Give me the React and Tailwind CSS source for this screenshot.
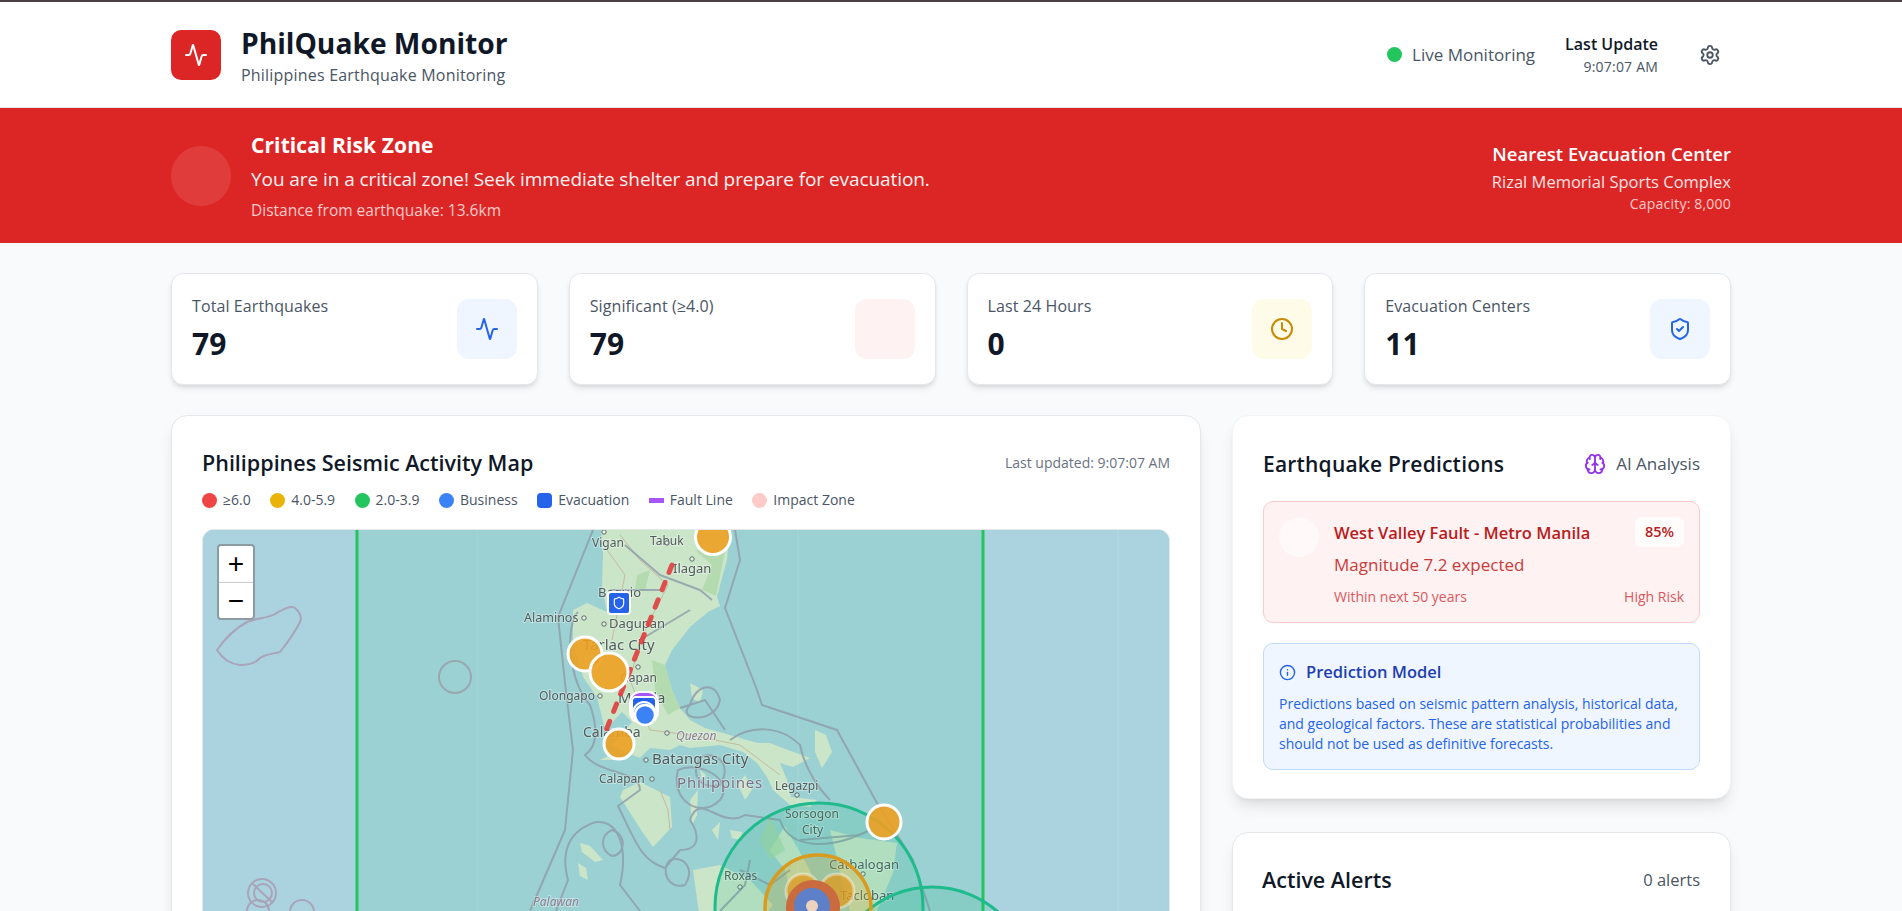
import React from "react";
import { Activity, Settings, Clock, ShieldCheck, Brain, Info, Shield } from "lucide-react";

const font = "font-['Open_Sans','Noto_Sans',sans-serif]";

function Stat({ label, value, box, children }) {
  return (
    <div className="flex items-center justify-between rounded-xl border border-gray-200 bg-white px-5 h-[112px] shadow-md">
      <div>
        <div className="text-[16px] leading-5 text-gray-600 tracking-[0.1px]">{label}</div>
        <div className="mt-[10px] text-[30px] leading-9 font-bold text-gray-900">{value}</div>
      </div>
      <div className={`flex h-[60px] w-[60px] items-center justify-center rounded-xl ${box}`}>{children}</div>
    </div>
  );
}

function Legend({ shape, label }) {
  return (
    <div className="flex items-center gap-[6px]">
      {shape}
      <span className="text-[14px] leading-5 text-gray-600">{label}</span>
    </div>
  );
}

const dot = (c) => <span className={`h-[15px] w-[15px] rounded-full ${c}`} />;

const labels = [
  ["Vigan", 592, 547, 12],
  ["Tabuk", 650, 545, 12],
  ["Ilagan", 673, 573, 13],
  ["Baguio", 598, 597, 13],
  ["Alaminos", 524, 622, 12.5],
  ["Dagupan", 609, 628, 13],
  ["Tarlac City", 583, 650, 15],
  ["Gapan", 620, 682, 12],
  ["Olongapo", 539, 700, 12],
  ["Manila", 618, 703, 15],
  ["Calamba", 583, 737, 14],
  ["Batangas City", 652, 764, 15],
  ["Calapan", 599, 783, 12],
  ["Legazpi", 775, 790, 12],
  ["Sorsogon", 785, 818, 12],
  ["City", 802, 834, 12],
  ["Catbalogan", 829, 869, 13],
  ["Roxas", 724, 880, 12],
  ["Tacloban", 840, 900, 13],
];

const towns = [
  [604, 532], [667, 543], [692, 559], [584, 618], [604, 624], [638, 667], [600, 696], [667, 733],
  [646, 760], [652, 779], [797, 795], [740, 887], [863, 874],
];

const land = [
  "M600,520 L725,520 L728,548 L727,560 L722,578 L717,597 L720,606 L708,612 L690,627 L680,640 L672,650 L665,665 L672,690 L680,708 L690,720 L705,728 L723,733 L747,740 L758,743 L770,743 L780,747 L810,758 L793,767 L780,763 L787,780 L791,797 L817,800 L810,807 L790,805 L773,790 L767,777 L757,763 L743,752 L720,745 L690,748 L680,745 L670,750 L650,748 L640,758 L625,752 L612,745 L632,722 L622,712 L605,730 L597,697 L583,677 L573,643 L573,610 L587,603 L607,612 L602,587 L603,553 Z",
  "M623,790 L640,782 L670,797 L672,827 L653,847 L643,833 L620,797 Z",
  "M830,830 L860,838 L897,843 L893,873 L877,911 L850,911 L842,880 L835,850 Z",
  "M693,870 L720,865 L750,880 L773,905 L760,920 L700,920 Z",
  "M785,826 L810,870 L820,911 L795,911 L785,870 L770,850 Z",
  "M815,730 L826,735 L832,752 L822,768 L815,752 Z",
  "M690,683 L703,690 L700,703 L692,698 Z",
  "M580,843 L590,846 L603,860 L595,862 L582,852 Z M578,863 L586,868 L588,880 L580,876 Z",
  "M690,800 L698,790 L697,815 L692,825 Z M700,770 L706,775 L702,780 Z M730,830 L742,832 L740,840 L732,838 Z",
  "M610,755 L618,760 L600,760 Z M745,775 L752,790 L745,800 L738,785 Z M712,830 L720,822 L718,840 Z",
];

const borders = [
  "M593,530 L558,617 L565,683 L573,750 L565,830 L530,911",
  "M735,530 L740,560 L725,608 L757,690 L762,705 L837,730 L877,803 L913,860 L930,911",
  "M578,612 C565,625 568,680 590,705 C596,722 600,745 585,755 C600,775 640,770 640,790 L618,806 C635,840 640,860 665,868 L680,850 C700,850 700,835 690,820 C700,790 720,830 745,815 L780,820 C790,850 830,850 870,830",
  "M596,822 C570,830 560,850 568,880 L556,911 M596,822 C620,820 628,850 620,885 L640,911",
  "M700,758 C690,775 700,790 720,785 C735,760 710,750 700,758 Z",
  "M625,545 L660,575 L700,590 L712,600 M610,590 L660,590 M640,640 L690,610 M680,708 L705,700 L725,730",
  "M678,770 C670,800 700,820 720,800 C735,780 700,760 678,770 Z",
  "M740,870 L770,885 L790,870 M720,911 L745,885 L750,860 M800,840 L860,835",
  "M612,830 C600,835 600,850 612,856 C625,855 628,835 612,830 Z",
  "M670,860 C660,870 668,890 685,885 C695,870 685,855 670,860 Z",
  "M730,740 C750,725 780,725 800,745 C805,770 820,790 830,800",
  "M690,705 C675,720 715,725 720,700 C715,680 695,685 690,705 Z",
];

export default function App() {
  return (
    <div className={`h-screen overflow-hidden bg-[#f9fafb] text-gray-900 ${font}`}>
      <div className="h-[2px] bg-[#4a3f44]" />
      <header className="h-[106px] border-b border-gray-200 bg-white">
        <div className="mx-auto flex h-full w-[1560px] items-center justify-between">
          <div className="flex items-center gap-[20px]">
            <div className="flex h-[50px] w-[50px] items-center justify-center rounded-[10px] bg-[#dc2626]">
              <Activity size={24} color="#fff" strokeWidth={2} />
            </div>
            <div>
              <div className="text-[28.2px] leading-9 font-bold text-gray-900">PhilQuake Monitor</div>
              <div className="mt-[4px] text-[16px] leading-5 text-gray-600 tracking-[0.2px]">Philippines Earthquake Monitoring</div>
            </div>
          </div>
          <div className="flex items-center">
            <span className="h-[15px] w-[15px] rounded-full bg-[#22c55e]" />
            <span className="ml-[10px] text-[17px] leading-5 text-gray-600">Live Monitoring</span>
            <div className="ml-[30px] text-right">
              <div className="text-[16px] leading-6 font-semibold text-gray-900">Last Update</div>
              <div className="mt-[1px] text-[14px] leading-5 text-gray-600 tracking-[0.2px]">9:07:07 AM</div>
            </div>
            <Settings className="ml-[41px] mr-[10px]" size={22} color="#4b5563" strokeWidth={2} />
          </div>
        </div>
      </header>

      <section className="h-[135px] bg-[#dc2626] text-white">
        <div className="mx-auto flex h-full w-[1560px] items-center justify-between">
          <div className="flex items-center gap-[20px]">
            <div className="h-[60px] w-[60px] rounded-full bg-white/10" />
            <div className="pt-[2px]">
              <div className="text-[21px] leading-7 font-bold tracking-[0.1px]">Critical Risk Zone</div>
              <div className="mt-[6px] text-[19px] leading-7 text-[#fef2f2] tracking-[-0.07px]">You are in a critical zone! Seek immediate shelter and prepare for evacuation.</div>
              <div className="mt-[5px] text-[15.5px] leading-6 text-[#fecaca]">Distance from earthquake: 13.6km</div>
            </div>
          </div>
          <div className="pt-[2px] text-right">
            <div className="text-[18.5px] leading-7 font-semibold">Nearest Evacuation Center</div>
            <div className="mt-[2px] text-[16.5px] leading-6 text-[#fee2e2]">Rizal Memorial Sports Complex</div>
            <div className="text-[14px] leading-[19px] text-[#fecaca] tracking-[0.2px]">Capacity: 8,000</div>
          </div>
        </div>
      </section>

      <main className="mx-auto w-[1560px] pt-[30px]">
        <div className="grid grid-cols-4 gap-[31px]">
          <Stat label="Total Earthquakes" value="79" box="bg-[#eff6ff]">
            <Activity size={24} color="#2563eb" />
          </Stat>
          <Stat label="Significant (≥4.0)" value="79" box="bg-[#fef2f2]" />
          <Stat label="Last 24 Hours" value="0" box="bg-[#fefce8]">
            <Clock size={24} color="#ca8a04" />
          </Stat>
          <Stat label="Evacuation Centers" value="11" box="bg-[#eff6ff]">
            <ShieldCheck size={24} color="#2563eb" />
          </Stat>
        </div>

        <div className="mt-[30px] grid grid-cols-[1030px_499px] gap-[31px]">
          <div className="h-[700px] rounded-2xl border border-gray-200 bg-white px-[30px] pt-[33px] shadow-lg">
            <div className="flex items-center justify-between">
              <h2 className="text-[21.5px] leading-7 font-semibold text-gray-900">Philippines Seismic Activity Map</h2>
              <span className="text-[14px] leading-5 text-gray-500">Last updated: 9:07:07 AM</span>
            </div>
            <div className="mt-[8px] flex h-[30px] items-center gap-[19.5px]">
              <Legend shape={dot("bg-[#ef4444]")} label="≥6.0" />
              <Legend shape={dot("bg-[#eab308]")} label="4.0-5.9" />
              <Legend shape={dot("bg-[#22c55e]")} label="2.0-3.9" />
              <Legend shape={dot("bg-[#3b82f6]")} label="Business" />
              <Legend shape={<span className="h-[15px] w-[15px] rounded-[4px] bg-[#2563eb]" />} label="Evacuation" />
              <Legend shape={<span className="h-[5px] w-[15px] bg-[#a855f7]" />} label="Fault Line" />
              <Legend shape={dot("bg-[#fecaca]")} label="Impact Zone" />
            </div>
            <div className="relative mt-[14px] h-[500px] overflow-hidden rounded-xl border border-gray-200 bg-[#aad3df]">
              <svg className="absolute inset-0 blur-[0.4px]" width="967" height="500" viewBox="203 530 967 500">
                <rect x="203" y="530" width="969" height="502" fill="#aad3df" />
                <g fill="#dfe9d5">
                  {land.map((d, i) => <path key={i} d={d} />)}
                </g>
                <g fill="#b6d8a6" opacity="0.6">
                  <path d="M695,550 L725,552 L716,596 L702,590 L712,565 Z" />
                  <path d="M637,575 L650,570 L645,590 L635,590 Z" />
                  <path d="M652,660 L665,665 L672,690 L680,708 L668,715 L655,690 Z" />
                  <path d="M770,815 L785,850 L770,860 L760,840 Z" />
                </g>
                <g fill="none" stroke="#d9b9a5" strokeWidth="1">
                  <path d="M620,535 L640,560 L668,585 L640,640 L630,680 L650,730 L690,735 L740,745 L780,775" />
                  <path d="M600,540 L625,575 L612,640" />
                  <path d="M660,790 L668,810 L670,830" />
                </g>
                <g fill="none" stroke="#9a98b0" strokeWidth="2" strokeLinejoin="round" opacity="0.8">
                  {borders.map((d, i) => <path key={i} d={d} />)}
                </g>
                <g fill="none" stroke="#a89fb5" strokeWidth="2" opacity="0.9">
                  <path d="M217,650 C224,640 232,630 247,622 C258,618 268,618 275,614 C282,610 290,605 295,608 C300,612 302,618 300,622 C295,632 288,642 280,652 C272,654 266,654 260,658 C255,664 248,665 240,665 C230,664 222,658 217,650 Z" />
                  <circle cx="455" cy="677" r="16" />
                  <circle cx="262" cy="893" r="14" />
                  <circle cx="263" cy="893" r="9" />
                  <path d="M252,883 L273,903" />
                  <circle cx="302" cy="912" r="12" />
                  <circle cx="258" cy="911" r="11" />
                </g>
                <rect x="357" y="500" width="626" height="560" fill="#22c55e" fillOpacity="0.1" />
                <path d="M477,530 V1030 M798,530 V1030 M1118,530 V1030" stroke="#ffffff" strokeOpacity="0.12" strokeWidth="1" />
                <g fontFamily="'Noto Sans','Open Sans',sans-serif" fill="#4f5b5a" stroke="#ffffff" strokeOpacity="0.35" strokeWidth="2" style={{ paintOrder: "stroke" }}>
                  {labels.map(([t, x, y, s]) => (
                    <text key={t} x={x} y={y} fontSize={s}>{t}</text>
                  ))}
                  <text x="677" y="788" fontSize="15" letterSpacing="0.8" fill="#7d6f86">Philippines</text>
                  <text x="676" y="740" fontSize="12" fontStyle="italic" fill="#8a7e95">Quezon</text>
                  <text x="533" y="906" fontSize="12" fontStyle="italic" fill="#8a7e95">Palawan</text>
                </g>
                <g fill="#ffffff" fillOpacity="0.5" stroke="#5d6a68" strokeWidth="1">
                  {towns.map(([x, y], i) => <circle key={i} cx={x} cy={y} r="2.2" />)}
                </g>
              </svg>

              <svg className="absolute inset-0" width="967" height="500" viewBox="203 530 967 500">
                <path d="M357,500 V1060 M983,500 V1060" stroke="#22c55e" strokeWidth="3" fill="none" />
                <path d="M672,565 L603,738" stroke="#e03e3e" strokeOpacity="0.9" strokeWidth="5" strokeDasharray="8 10.7" strokeLinecap="round" fill="none" />
                <circle cx="819" cy="907" r="104" fill="#10b981" fillOpacity="0.14" stroke="#1fbb8c" strokeWidth="3" />
                <circle cx="932" cy="987" r="100" fill="#10b981" fillOpacity="0.14" stroke="#1fbb8c" strokeWidth="3" />
                <g fill="#eda021" fillOpacity="0.9" stroke="#ffffff" strokeWidth="3">
                  <circle cx="713" cy="537" r="17.5" />
                  <circle cx="585" cy="654" r="17" />
                  <circle cx="609" cy="672" r="19" />
                  <circle cx="619" cy="744" r="15" />
                  <circle cx="884" cy="822" r="17" />
                </g>
                <circle cx="818" cy="908" r="53" fill="#f59e0b" fillOpacity="0.22" stroke="#d99a1e" strokeWidth="3.5" />
                <circle cx="803" cy="891" r="17" fill="#e09a1c" fillOpacity="0.75" stroke="#ffffff" strokeOpacity="0.4" strokeWidth="3" />
                <circle cx="837" cy="891" r="17" fill="#e09a1c" fillOpacity="0.75" stroke="#ffffff" strokeOpacity="0.4" strokeWidth="3" />
                <circle cx="813" cy="907" r="27" fill="#c96a3f" />
                <circle cx="812" cy="906" r="18" fill="#5d80c8" />
                <circle cx="812" cy="906" r="6" fill="#edd2c0" />
                <rect x="630" y="692" width="28" height="30" rx="10" fill="#a855f7" stroke="#ffffff" strokeWidth="2" />
                <rect x="632" y="697" width="24" height="24" rx="4" fill="#2563eb" stroke="#ffffff" strokeWidth="2" />
                <circle cx="644" cy="713" r="11" fill="#3b82f6" stroke="#ffffff" strokeWidth="2" />
                <circle cx="645" cy="715" r="10" fill="#3b82f6" stroke="#ffffff" strokeWidth="2.5" />
              </svg>

              <div className="absolute left-[14px] top-[14px] flex h-[76px] w-[38px] flex-col rounded-[4px] border-2 border-[#8d9ca3] bg-white font-['Liberation_Sans',sans-serif] text-black">
                <div className="flex h-[37px] items-center justify-center border-b border-[#ccc] text-[28px] leading-none">+</div>
                <div className="flex h-[35px] items-center justify-center text-[28px] leading-none">−</div>
              </div>
              <div className="absolute left-[404px] top-[61px] flex h-[24px] w-[24px] items-center justify-center rounded-[4px] border-2 border-white bg-[#2563eb]">
                <Shield size={14} color="#fff" />
              </div>
            </div>
          </div>

          <div className="flex flex-col gap-[33px]">
            <div className="h-[384px] rounded-2xl border border-gray-100 bg-white px-[30px] pt-[33px] shadow-lg">
              <div className="flex h-[30px] items-center justify-between">
                <h2 className="text-[21px] leading-7 font-semibold tracking-[0.2px] text-gray-900">Earthquake Predictions</h2>
                <div className="flex items-center gap-[10px]">
                  <Brain size={22} color="#9333ea" />
                  <span className="text-[17px] leading-5 text-gray-600">AI Analysis</span>
                </div>
              </div>
              <div className="mt-[22px] flex h-[122px] gap-[15px] rounded-[10px] border border-[#fecaca] bg-[#fef2f2] p-[15px]">
                <div className="h-[40px] w-[40px] shrink-0 rounded-full bg-white/50" />
                <div className="flex-1">
                  <div className="flex items-start justify-between">
                    <div className="mt-[6px] text-[16.5px] leading-5 font-semibold text-[#b91c1c]">West Valley Fault - Metro Manila</div>
                    <div className="flex h-[30px] w-[49px] items-center justify-center rounded-md bg-white/75 text-[14.5px] font-semibold text-[#b91c1c]">85%</div>
                  </div>
                  <div className="mt-[8px] text-[17px] leading-5 text-[#c93b3b]">Magnitude 7.2 expected</div>
                  <div className="mt-[12px] flex justify-between text-[14px] leading-5 text-[#d9595f]">
                    <span>Within next 50 years</span>
                    <span>High Risk</span>
                  </div>
                </div>
              </div>
              <div className="mt-[20px] h-[127px] rounded-[10px] border border-[#bfdbfe] bg-[#eff6ff] px-[15px] pt-[18px]">
                <div className="flex items-center gap-[10px]">
                  <Info size={17} color="#2563eb" />
                  <span className="text-[16.5px] leading-5 font-semibold text-[#1e40af]">Prediction Model</span>
                </div>
                <p className="mt-[12px] whitespace-nowrap text-[14px] leading-5 text-[#2563eb]">
                  Predictions based on seismic pattern analysis, historical data,
                  <br />
                  and geological factors. These are statistical probabilities and
                  <br />
                  should not be used as definitive forecasts.
                </p>
              </div>
            </div>
            <div className="h-[300px] rounded-2xl border border-gray-200 bg-white px-[29px] pt-[32px] shadow-lg">
              <div className="flex h-[30px] items-center justify-between">
                <h2 className="text-[21.5px] leading-7 font-semibold text-gray-900">Active Alerts</h2>
                <span className="mr-[1px] text-[16.5px] leading-5 text-gray-600">0 alerts</span>
              </div>
            </div>
          </div>
        </div>
      </main>
    </div>
  );
}
